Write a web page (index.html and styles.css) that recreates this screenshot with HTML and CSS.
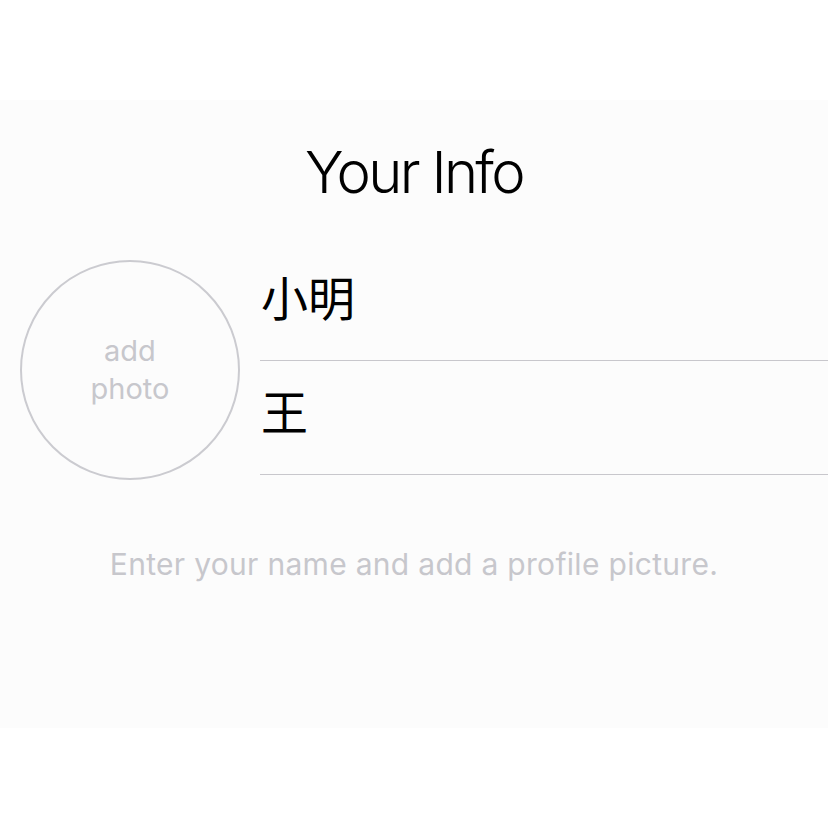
FILE: index.html
```html
<!DOCTYPE html>
<html lang="en">
<head>
    <meta charset="UTF-8">
    <meta name="viewport" content="width=device-width, initial-scale=1.0">
    <title>Your Info</title>
    <link rel="stylesheet" href="styles.css">
</head>
<body>
    <div class="top"></div>
    <main class="sheet">
        <h1 class="title">Your Info</h1>
        <div class="profile">
            <div class="avatar">
                <span>add<br>photo</span>
            </div>
            <div class="fields">
                <div class="field">小明</div>
                <div class="field">王</div>
            </div>
        </div>
        <p class="hint">Enter your name and add a profile picture.</p>
    </main>
</body>
</html>
```

FILE: styles.css
```css
body{
    margin: 0;
    background: #ffffff;
    font-family: "Inter", "Noto Sans CJK SC", sans-serif;
}
.top{
    height: 100px;
}
.sheet{
    height: 628px;
    background: #fcfcfc;
    display: flex;
    flex-direction: column;
}
.title{
    margin: 30px 0 0 0;
    text-align: center;
    font-size: 58px;
    font-weight: 300;
    line-height: 84px;
    letter-spacing: -2.7px;
    color: #000;
}
.profile{
    display: flex;
    align-items: flex-start;
    margin-top: 33px;
}
.avatar{
    width: 216px;
    height: 216px;
    margin-left: 20px;
    margin-top: 13px;
    border: 2px solid #cbcbd0;
    border-radius: 50%;
    display: flex;
    justify-content: center;
    align-items: center;
    text-align: center;
    color: #c7c7cc;
    font-size: 29px;
    line-height: 38px;
}
.fields{
    flex: 1;
    margin-left: 20px;
}
.field{
    height: 114px;
    border-bottom: 1px solid #c8c7cc;
    display: flex;
    align-items: center;
    padding-left: 1px;
    padding-bottom: 17px;
    box-sizing: border-box;
    font-family: "Noto Sans CJK SC", sans-serif;
    font-size: 47px;
    color: #000;
}
.hint{
    margin: 66px 0 0 0;
    text-align: center;
    font-size: 30px;
    letter-spacing: 0.3px;
    color: #c7c7cc;
}
```
